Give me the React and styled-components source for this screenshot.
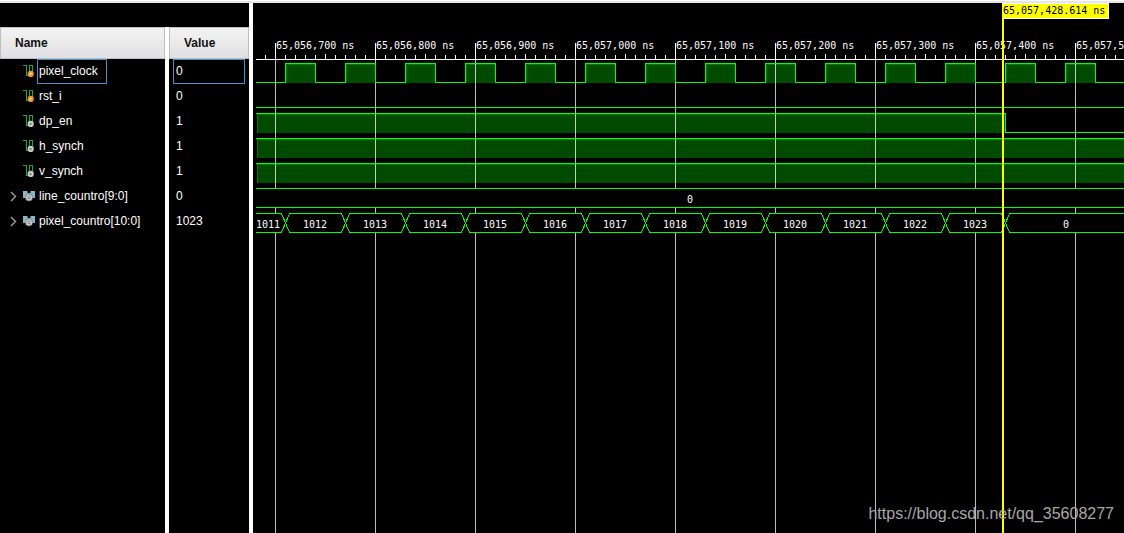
import React from 'react';
import styled, { createGlobalStyle } from 'styled-components';

const GlobalStyle = createGlobalStyle`
  * {
    box-sizing: border-box;
  }
  body {
    margin: 0;
    background: #000;
    font-family: "Liberation Sans", Arial, sans-serif;
    font-size: 12px;
    color: #fff;
  }
`;

const Viewer = styled.div`
  display: flex;
  flex-direction: column;
  min-height: 100vh;
  border-top: 1px solid #fff;
  background: #000;
`;

const TopEdge = styled.div`
  height: 2px;
  background: #e6e6e6;
`;

const Panels = styled.main`
  display: flex;
  flex: 1;
`;

const SignalPanel = styled.section`
  display: flex;
  flex-direction: column;
  flex: 0 0 253px;
  padding-top: 24px;
  border-right: 4px solid #fff;
`;

const SignalTable = styled.table`
  flex: 1;
  display: flex;
  flex-direction: column;
  border-spacing: 0;
  thead, tbody {
    display: block;
  }
  tbody {
    flex: 1;
    display: flex;
    flex-direction: column;
  }
`;

const Row = styled.tr`
  display: grid;
  grid-template-columns: 165px 1fr;
  flex: ${(props) => (props.$filler ? '1' : 'none')};
`;

const HeadCell = styled.th`
  height: 32px;
  padding: 0 14px;
  border: 1px solid #bebebe;
  background: linear-gradient(#f3f3f3, #e0e0e2);
  color: #111;
  font-weight: bold;
  line-height: 30px;
  text-align: left;
`;

const ValueHead = styled(HeadCell)`
  box-shadow: -4px 0 0 #fff;
  margin-left: 4px;
`;

const NameCell = styled.td`
  display: flex;
  align-items: center;
  height: 25px;
  padding: 0 0 0 8px;
`;

const ValueCell = styled.td`
  display: flex;
  min-height: 25px;
  padding: 0 4px;
  border-left: 4px solid #fff;
`;

const Expander = styled.button`
  display: flex;
  justify-content: center;
  width: 10px;
  padding: 0;
  border: 0;
  background: none;
  cursor: pointer;
`;

const ExpanderSpace = styled.span`
  width: 10px;
`;

const IconBox = styled.span`
  display: flex;
  width: 14px;
  margin: 0 0 0 5px;
`;

const SignalName = styled.span`
  height: 25px;
  padding: 0 8px 0 1px;
  border: 1px solid ${(props) => (props.$selected ? '#4a90c8' : 'transparent')};
  line-height: 23px;
`;

const SignalValue = styled(SignalName)`
  flex: ${(props) => (props.$selected ? '1' : 'none')};
  padding: 0 2px;
`;

const WavePanel = styled.section`
  position: relative;
  flex: 1;
  min-width: 0;
  overflow: hidden;
`;

const WaveSvg = styled.svg`
  position: absolute;
  inset: 0;
  width: 100%;
  height: 100%;
  shape-rendering: crispEdges;
  text {
    font-family: "DejaVu Sans Mono", monospace;
    font-size: 10px;
    fill: #fff;
  }
`;

const CursorLabel = styled.output`
  position: absolute;
  top: 0;
  left: 749px;
  padding: 0 3px 0 1px;
  border: 1px solid #fff;
  border-left: 0;
  background: #ff0;
  color: #000;
  font-family: "DejaVu Sans Mono", monospace;
  font-size: 10px;
  line-height: 14px;
`;

const Watermark = styled.a`
  position: absolute;
  right: 10px;
  bottom: 9px;
  color: #a8a8a8;
  font-size: 16px;
  line-height: 20px;
  text-decoration: none;
`;

const signals = [
  { name: 'pixel_clock', value: '0', kind: 'input', selected: true },
  { name: 'rst_i', value: '0', kind: 'input' },
  { name: 'dp_en', value: '1', kind: 'wire' },
  { name: 'h_synch', value: '1', kind: 'wire' },
  { name: 'v_synch', value: '1', kind: 'wire' },
  { name: 'line_countro[9:0]', value: '0', kind: 'bus' },
  { name: 'pixel_countro[10:0]', value: '1023', kind: 'bus' },
];

const GREEN = '#00ff00';
const FILL = '#004b00';
const EDGE = '#007d00';
const END = 3000;
const START = 3;
const CURSOR_X = 749;

const times = ['65,056,700', '65,056,800', '65,056,900', '65,057,000', '65,057,100',
  '65,057,200', '65,057,300', '65,057,400', '65,057,500'];
const gridLines = times.map((time, i) => ({ time, x: 22 + i * 100 }));
const ticks = Array.from({ length: 87 }, (_, i) => 12 + i * 10);
const pulses = Array.from({ length: 14 }, (_, i) => 32 + i * 60);
const counts = Array.from({ length: 13 }, (_, i) => 1011 + i);

const BitIcon = ({ kind }) => (
  <svg width="12" height="13" viewBox="0 0 12 13">
    <path d="M0 .5H3.5V10.5H6.5V.5H9.5V8" fill="none" stroke="#2f9a48" strokeWidth="1.2" />
    <circle cx="7.7" cy="8.9" r="3.1" fill={kind === 'input' ? '#f0932b' : '#c8c8c8'} />
    {kind === 'input'
      ? <path d="M6.6 10L8.8 7.8" stroke="#ffd9a0" strokeWidth="1.4" />
      : <circle cx="7.7" cy="8.9" r="1" fill="#777" />}
  </svg>
);

const BusIcon = () => (
  <svg width="12" height="13" viewBox="0 0 12 13">
    <path d="M0 1H4.5V3H7.5V1H12V8H0Z" fill="#8ab6cd" />
    <circle cx="6" cy="7.5" r="3.6" fill="#d4d4d4" stroke="#555" strokeWidth=".6" />
    <circle cx="6" cy="7.5" r="1.4" fill="#d4d4d4" stroke="#777" strokeWidth=".9" />
  </svg>
);

const Chevron = () => (
  <svg width="7" height="11" viewBox="0 0 7 11">
    <path d="M1 1L5.5 5.5L1 10" fill="none" stroke="#a0a0a0" strokeWidth="1.4" />
  </svg>
);

const SignalRow = ({ signal }) => (
  <Row>
    <NameCell>
      {signal.kind === 'bus'
        ? <Expander aria-label={'Expand ' + signal.name}><Chevron /></Expander>
        : <ExpanderSpace />}
      <IconBox>{signal.kind === 'bus' ? <BusIcon /> : <BitIcon kind={signal.kind} />}</IconBox>
      <SignalName $selected={signal.selected}>{signal.name}</SignalName>
    </NameCell>
    <ValueCell>
      <SignalValue $selected={signal.selected}>{signal.value}</SignalValue>
    </ValueCell>
  </Row>
);

// a signal that is held high between two times
const HighBand = ({ y, to }) => (
  <g>
    <rect x="4" y={y} width={to - 4} height="20" fill={FILL} />
    <rect x="4" y={y + 1} width={to - 4} height="1" fill={EDGE} />
    <rect x="4" y={y + 1} width="1" height="19" fill={EDGE} />
    <rect x={START} y={y} width={to - START} height="1" fill={GREEN} />
  </g>
);

const clockPath = () => {
  let d = `M${START} 79.5`;
  pulses.forEach((x) => {
    d += `H${x + 0.5}V60.5H${x + 30.5}V79.5`;
  });
  return d + `H${END}`;
};

// one hexagonal value segment of a bus
const BusSegment = ({ from, to, label, labelX }) => (
  <g>
    <path
      d={`M${from + 0.5} 220L${from + 4.5} 210.5H${to - 3.5}L${to + 0.5} 220L${to - 3.5} 229.5H${from + 4.5}Z`}
      fill="#000"
      stroke={GREEN}
    />
    <text x={labelX} y="225" textAnchor="middle">{label}</text>
  </g>
);

const Waveforms = () => (
  <WaveSvg role="img" aria-label="Signal waveforms">
    {pulses.map((x) => (
      <g key={x}>
        <rect x={x} y="60" width="30" height="20" fill={FILL} />
        <rect x={x + 1} y="61" width="29" height="1" fill={EDGE} />
        <rect x={x + 1} y="61" width="1" height="18" fill={EDGE} />
      </g>
    ))}
    <HighBand y={110} to={752} />
    <HighBand y={135} to={END} />
    <HighBand y={160} to={END} />

    {gridLines.map(({ x, time }) => (
      <g key={time}>
        <rect x={x} y="57" width="1" height="100%" fill="#fff" opacity="0.75" />
        <rect x={x} y="40" width="1" height="17" fill="#fff" />
        <text x={x + 1} y="46">{time} ns</text>
      </g>
    ))}
    {ticks.map((x) => (
      <rect key={x} x={x} y={x % 50 === 22 ? 51 : 52} width="1" height={x % 50 === 22 ? 5 : 4} fill="#fff" />
    ))}
    <rect x={START} y="56" width="100%" height="1" fill="#fff" />

    <path d={clockPath()} fill="none" stroke={GREEN} />
    <rect x={START} y="104" width="100%" height="1" fill={GREEN} />
    <path d={`M${START} 110.5H752.5V129.5H${END}`} fill="none" stroke={GREEN} />
    <rect x={START} y="135" width="100%" height="1" fill={GREEN} />
    <rect x={START} y="160" width="100%" height="1" fill={GREEN} />

    <rect x={START} y="185" width="100%" height="20" fill="#000" />
    <rect x={START} y="185" width="100%" height="1" fill={GREEN} />
    <rect x={START} y="204" width="100%" height="1" fill={GREEN} />
    <text x="437" y="200" textAnchor="middle">0</text>

    {counts.map((count, i) => (
      <BusSegment
        key={count}
        from={i * 60 - 28}
        to={i * 60 + 32}
        label={count}
        labelX={i === 0 ? 15 : i * 60 + 2}
      />
    ))}
    <BusSegment from={752} to={END} label="0" labelX={813} />
    <rect x="0" y="208" width={START} height="24" fill="#000" />

    <rect x={CURSOR_X} y="0" width="2" height="100%" fill="#ff0" />
  </WaveSvg>
);

export default function App() {
  return (
    <Viewer>
      <GlobalStyle />
      <TopEdge />
      <Panels>
        <SignalPanel>
          <SignalTable>
            <thead>
              <Row>
                <HeadCell>Name</HeadCell>
                <ValueHead>Value</ValueHead>
              </Row>
            </thead>
            <tbody>
              {signals.map((signal) => <SignalRow key={signal.name} signal={signal} />)}
              <Row $filler aria-hidden="true">
                <NameCell />
                <ValueCell />
              </Row>
            </tbody>
          </SignalTable>
        </SignalPanel>
        <WavePanel>
          <Waveforms />
          <CursorLabel>65,057,428.614 ns</CursorLabel>
          <Watermark href="https://blog.csdn.net/qq_35608277">https://blog.csdn.net/qq_35608277</Watermark>
        </WavePanel>
      </Panels>
    </Viewer>
  );
}
